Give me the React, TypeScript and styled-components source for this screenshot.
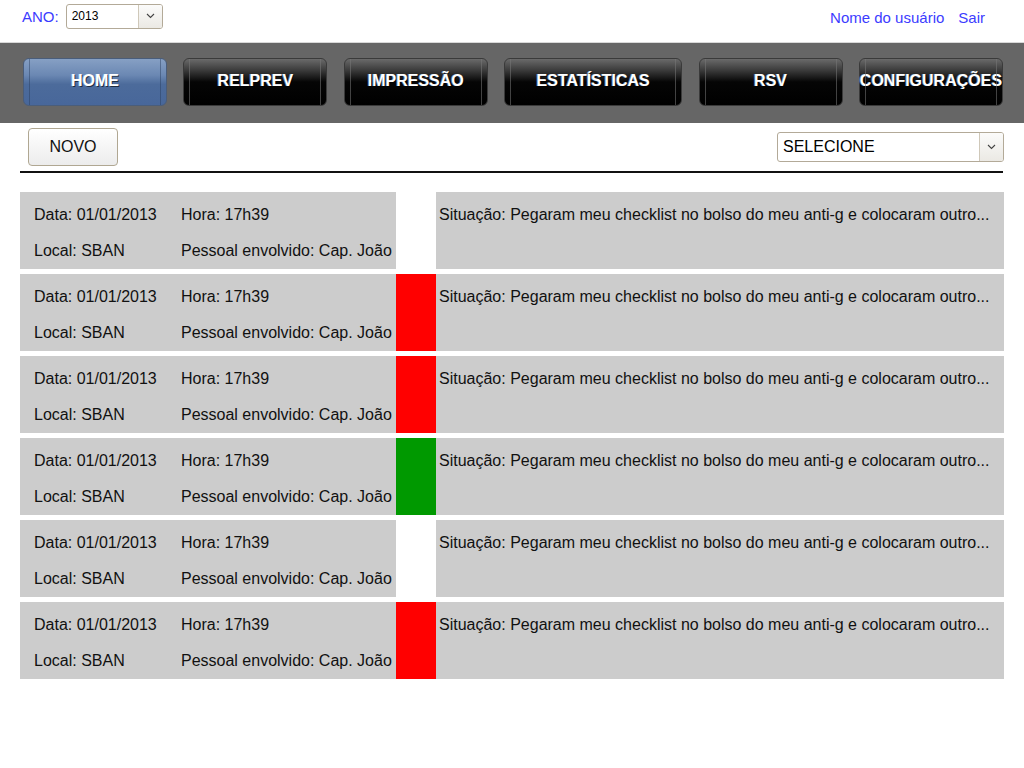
import React from "react";
import styled, { createGlobalStyle, css } from "styled-components";

const Global = createGlobalStyle`
  html, body { margin: 0; padding: 0; background: #fff; }
  body { font-family: "Liberation Sans", Arial, sans-serif; }
  * { box-sizing: border-box; }
`;

const Header = styled.header`
  height: 42px;
  display: flex;
  justify-content: space-between;
  align-items: flex-start;
  padding: 4px 39px 0 22px;
`;

const HeaderGroup = styled.div`
  display: flex;
  align-items: center;
  height: 24px;
  gap: 6px;
  font-size: 15px;
  color: #3c3cff;
`;

const Link = styled.a`
  color: #3c3cff;
  text-decoration: none;
  font-size: 15px;
  margin-left: 8px;
  position: relative;
  top: 1px;
`;

const SelectBox = styled.div<{ $w: number; $h: number; $fs: number }>`
  display: flex;
  width: ${(p) => p.$w}px;
  height: ${(p) => p.$h}px;
  border: 1px solid #b3aa98;
  border-radius: 3px;
  background: #fff;
  overflow: hidden;
  font-size: ${(p) => p.$fs}px;
  color: #000;
`;

const SelectValue = styled.div`
  flex: 1;
  display: flex;
  align-items: center;
  padding-left: 5px;
`;

const SelectArrow = styled.div`
  width: 24px;
  border-left: 1px solid #cfc8b9;
  background: linear-gradient(#fbfbfa, #ebe9e4);
  display: flex;
  align-items: center;
  justify-content: center;
`;

const AnoLabel = styled.span`
  margin-right: 1px;
`;

const NavBand = styled.nav`
  height: 81px;
  border-top: 1px solid #d8d8d8;
  background: #666;
  display: flex;
  justify-content: space-between;
  align-items: flex-start;
  padding: 15px 21px 0 23px;
`;

const NavButton = styled.div<{ $active?: boolean; $w: number }>`
  position: relative;
  width: ${(p) => p.$w}px;
  height: 48px;
  border-radius: 6px;
  border: 1px solid #3a3a3a;
  display: flex;
  align-items: center;
  justify-content: center;
  padding-bottom: 3px;
  color: #fff;
  font-weight: bold;
  font-size: 16px;
  white-space: nowrap;
  text-shadow: -1px 0 0 rgba(150, 200, 255, 0.55), 1px 1px 0 rgba(0, 0, 0, 0.6);
  ${(p) =>
    p.$active
      ? css`
          background: linear-gradient(#86a0c4 0%, #6b88b3 35%, #4c6b9b 55%, #48679a 100%);
          border-color: #4a5d7a;
        `
      : css`
          background: linear-gradient(#6a6a6a 0%, #3a3a3a 25%, #050505 50%, #000 100%);
        `}
  &::before,
  &::after {
    content: "";
    position: absolute;
    top: 0;
    bottom: 0;
    width: 1px;
    background: ${(p) => (p.$active ? "rgba(40,60,90,0.45)" : "rgba(120,120,120,0.55)")};
  }
  &::before { left: 5px; }
  &::after { right: 5px; }
`;

const Toolbar = styled.div`
  height: 48px;
  display: flex;
  justify-content: space-between;
  align-items: flex-start;
  padding: 5px 20px 0 28px;
`;

const NovoButton = styled.button`
  width: 90px;
  height: 38px;
  border: 1px solid #b0a792;
  border-radius: 4px;
  background: linear-gradient(#ffffff, #ececec);
  font-family: "Liberation Sans", Arial, sans-serif;
  font-size: 16px;
  color: #111;
  padding: 0;
  cursor: pointer;
`;

const SelectWrap = styled.div`
  margin-top: 4px;
`;

const Divider = styled.hr`
  margin: 0 21px 0 20px;
  border: 0;
  height: 2px;
  background: #111;
`;

const List = styled.div`
  margin: 19px 20px 0 20px;
  display: flex;
  flex-direction: column;
  gap: 5px;
`;

const Row = styled.div`
  height: 77px;
  display: grid;
  grid-template-columns: 376px 40px 1fr;
  background: #ccc;
  font-size: 16px;
  color: #111;
`;

const InfoGrid = styled.div`
  display: grid;
  grid-template-columns: 147px 1fr;
  grid-auto-rows: 18px;
  row-gap: 18px;
  padding: 14px 0 0 14px;
  white-space: nowrap;
`;

const Status = styled.div<{ $color: string }>`
  background: ${(p) => p.$color};
`;

const Situation = styled.div`
  padding: 14px 0 0 3px;
  line-height: 18px;
  white-space: nowrap;
`;

const Chevron = () => (
  <svg width="9" height="6" viewBox="0 0 9 6">
    <path d="M1 1l3.5 3.5L8 1" fill="none" stroke="#444" strokeWidth="1.1" />
  </svg>
);

const navItems = [
  { label: "HOME", w: 144, active: true },
  { label: "RELPREV", w: 144 },
  { label: "IMPRESSÃO", w: 144 },
  { label: "ESTATÍSTICAS", w: 178 },
  { label: "RSV", w: 144 },
  { label: "CONFIGURAÇÕES", w: 144 },
];

const rows = ["#fff", "#ff0000", "#ff0000", "#009900", "#fff", "#ff0000"];

export default function App() {
  return (
    <>
      <Global />
      <Header>
        <HeaderGroup>
          <AnoLabel>ANO:</AnoLabel>
          <SelectBox $w={97} $h={25} $fs={12}>
            <SelectValue>2013</SelectValue>
            <SelectArrow>
              <Chevron />
            </SelectArrow>
          </SelectBox>
        </HeaderGroup>
        <HeaderGroup>
          <Link href="#">Nome do usuário</Link>
          <Link href="#">Sair</Link>
        </HeaderGroup>
      </Header>
      <NavBand>
        {navItems.map((n) => (
          <NavButton key={n.label} $w={n.w} $active={n.active}>
            {n.label}
          </NavButton>
        ))}
      </NavBand>
      <Toolbar>
        <NovoButton>NOVO</NovoButton>
        <SelectWrap>
          <SelectBox $w={227} $h={30} $fs={16}>
            <SelectValue>SELECIONE</SelectValue>
            <SelectArrow>
              <Chevron />
            </SelectArrow>
          </SelectBox>
        </SelectWrap>
      </Toolbar>
      <Divider />
      <List>
        {rows.map((c, i) => (
          <Row key={i}>
            <InfoGrid>
              <span>Data: 01/01/2013</span>
              <span>Hora: 17h39</span>
              <span>Local: SBAN</span>
              <span>Pessoal envolvido: Cap. João</span>
            </InfoGrid>
            <Status $color={c} />
            <Situation>
              Situação: Pegaram meu checklist no bolso do meu anti-g e colocaram outro...
            </Situation>
          </Row>
        ))}
      </List>
    </>
  );
}
